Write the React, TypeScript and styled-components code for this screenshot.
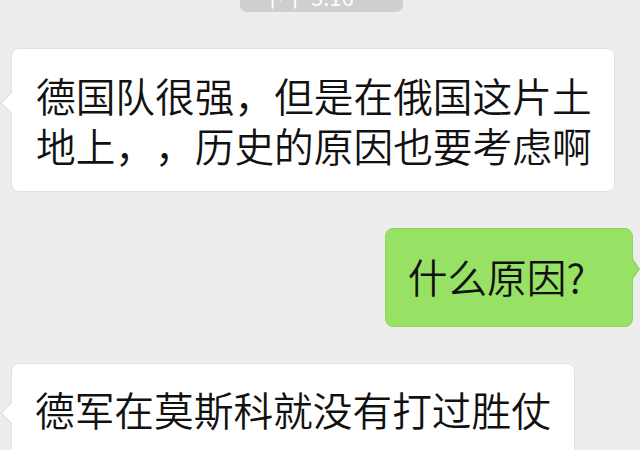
import React from "react";
import styled, { createGlobalStyle, css } from "styled-components";

const Global = createGlobalStyle`
  html, body {
    margin: 0;
    padding: 0;
    background: #ededed;
    overflow: hidden;
  }
  body {
    font-family: "Noto Sans CJK SC", "Noto Sans", sans-serif;
  }
`;

const Page = styled.div`
  width: 640px;
  height: 450px;
  overflow: hidden;
  display: flex;
  flex-direction: column;
  gap: 36px;
  background: #ededed;
`;

const StampRow = styled.div`
  display: flex;
  justify-content: center;
  padding-left: 3px;
`;

const Stamp = styled.div`
  width: 163px;
  height: 12px;
  background: #cfcfcf;
  border-radius: 0 0 7px 7px;
  overflow: hidden;
  display: flex;
  align-items: flex-end;
  padding-left: 22px;
  box-sizing: border-box;
`;

const StampText = styled.span`
  color: #ffffff;
  font-size: 22px;
  line-height: 20px;
  margin-bottom: 6px;
  font-family: "Noto Sans CJK SC", sans-serif;
  white-space: nowrap;
`;

const Row = styled.div<{ $side: "left" | "right" }>`
  display: flex;
  justify-content: ${(p) => (p.$side === "left" ? "flex-start" : "flex-end")};
  padding: ${(p) => (p.$side === "left" ? "0 0 0 11px" : "0 7px 0 0")};
`;

const Bubble = styled.div<{ $side: "left" | "right"; $tailTop: number }>`
  position: relative;
  flex: none;
  white-space: nowrap;
  font-size: 39.7px;
  font-weight: 350;
  line-height: 50px;
  text-spacing-trim: space-all;
  color: #111111;
  border-radius: 8px;
  box-sizing: border-box;
  ${(p) =>
    p.$side === "left"
      ? css`
          background: #ffffff;
          border: 1px solid #e2e2e2;
        `
      : css`
          background: #97e264;
          border: 1px solid #8fd45e;
        `}

  &::before,
  &::after {
    content: "";
    position: absolute;
    width: 0;
    height: 0;
    border-top: 11px solid transparent;
    border-bottom: 11px solid transparent;
  }
  ${(p) =>
    p.$side === "left"
      ? css`
          &::before {
            left: -12px;
            top: ${p.$tailTop - 11}px;
            border-right: 11px solid #e2e2e2;
          }
          &::after {
            left: -10px;
            top: ${p.$tailTop - 10}px;
            border-top-width: 10px;
            border-bottom-width: 10px;
            border-right: 10px solid #ffffff;
          }
        `
      : css`
          &::before {
            right: -8px;
            top: ${p.$tailTop - 10}px;
            border-top-width: 10px;
            border-bottom-width: 10px;
            border-left: 7px solid #8fd45e;
          }
          &::after {
            right: -6px;
            top: ${p.$tailTop - 9}px;
            border-top-width: 9px;
            border-bottom-width: 9px;
            border-left: 6px solid #97e264;
          }
        `}
`;

const LongBubble = styled(Bubble)`
  padding: 21px 22px 21px 24px;
`;

const ShortBubble = styled(Bubble)`
  padding: 22px 47px 25px 22px;
`;

const TallBubble = styled(Bubble)`
  padding: 20px 23px 40px 23px;
`;

export default function App() {
  return (
    <>
      <Global />
      <Page>
        <StampRow>
          <Stamp>
            <StampText>下午 3:16</StampText>
          </Stamp>
        </StampRow>
        <Row $side="left">
          <LongBubble $side="left" $tailTop={54}>
            德国队很强，但是在俄国这片土
            <br />
            地上，，历史的原因也要考虑啊
          </LongBubble>
        </Row>
        <Row $side="right">
          <ShortBubble $side="right" $tailTop={40}>
            什么原因?
          </ShortBubble>
        </Row>
        <Row $side="left">
          <TallBubble $side="left" $tailTop={49}>
            德军在莫斯科就没有打过胜仗
          </TallBubble>
        </Row>
      </Page>
    </>
  );
}
